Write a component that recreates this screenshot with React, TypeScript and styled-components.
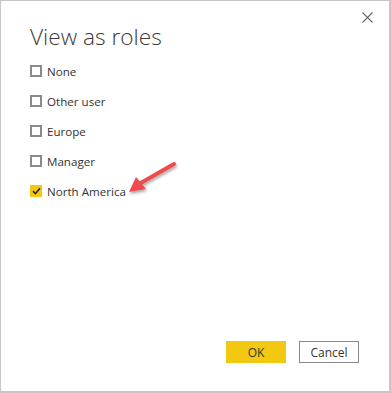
import styled, { createGlobalStyle } from 'styled-components';

const GlobalStyle = createGlobalStyle`
  html, body {
    margin: 0;
    padding: 0;
    background: #ffffff;
  }
  body {
    font-family: "Open Sans", "Noto Sans", sans-serif;
  }
`;

const Dialog = styled.div`
  box-sizing: border-box;
  width: 391px;
  height: 393px;
  border: 1px solid #c6c6c6;
  border-right-width: 2px;
  border-bottom-width: 2px;
  background: #ffffff;
  position: relative;
  display: flex;
  flex-direction: column;
  padding: 18px 30px 28px 29px;
`;

const CloseButton = styled.button`
  position: absolute;
  top: 8px;
  right: 14px;
  width: 16px;
  height: 16px;
  padding: 0;
  border: none;
  background: transparent;
  display: flex;
  align-items: center;
  justify-content: center;
`;

const Title = styled.h1`
  margin: 0 0 7px;
  font-family: "Open Sans", sans-serif;
  font-weight: 300;
  font-size: 22.7px;
  line-height: 36px;
  color: #3b3b3b;
`;

const RoleList = styled.div`
  display: flex;
  flex-direction: column;
  gap: 12px;
`;

const RoleRow = styled.label`
  display: flex;
  align-items: center;
  gap: 5px;
  height: 18px;
  position: relative;
  font-family: "Open Sans", sans-serif;
  font-size: 11.6px;
  color: #333333;
`;

const Box = styled.span<{ $checked: boolean }>`
  box-sizing: border-box;
  width: 12px;
  height: 12px;
  border: ${({ $checked }) => ($checked ? 'none' : '2px solid #8a8a8a')};
  background: ${({ $checked }) => ($checked ? '#f2c811' : '#ffffff')};
  display: flex;
  align-items: center;
  justify-content: center;
`;

const Pointer = styled.svg`
  position: absolute;
  left: 95px;
  top: -24px;
  overflow: visible;
`;

const Spacer = styled.div`
  flex: 1;
`;

const Footer = styled.div`
  display: flex;
  justify-content: flex-end;
  gap: 13px;
`;

const Button = styled.button<{ $primary?: boolean }>`
  box-sizing: border-box;
  width: 60px;
  height: 22px;
  padding: 0;
  font-family: "Open Sans", sans-serif;
  font-size: 12px;
  color: #333333;
  background: ${({ $primary }) => ($primary ? '#f2c811' : '#ffffff')};
  border: ${({ $primary }) => ($primary ? 'none' : '1px solid #8a8a8a')};
`;

const roles = ['None', 'Other user', 'Europe', 'Manager', 'North America'];

export default function App() {
  return (
    <>
      <GlobalStyle />
      <Dialog>
        <CloseButton aria-label="Close">
          <svg width="11" height="11" viewBox="0 0 11 11">
            <path d="M0.5 0.5 L10.5 10.5 M10.5 0.5 L0.5 10.5" stroke="#6b6b6b" strokeWidth="1.1" />
          </svg>
        </CloseButton>
        <Title>View as roles</Title>
        <RoleList>
          {roles.map((role) => {
            const checked = role === 'North America';
            return (
              <RoleRow key={role}>
                <Box $checked={checked}>
                  {checked && (
                    <svg width="9" height="8" viewBox="0 0 9 8">
                      <path d="M1 4.2 L3.4 6.5 L8 1.2" fill="none" stroke="#2b2b2b" strokeWidth="1.6" />
                    </svg>
                  )}
                </Box>
                {role}
                {checked && (
                  <Pointer width="60" height="40" viewBox="0 0 60 40">
                    <defs>
                      <filter id="sh" x="-20%" y="-20%" width="150%" height="160%">
                        <feDropShadow dx="1" dy="2" stdDeviation="1.5" floodColor="#000" floodOpacity="0.35" />
                      </filter>
                    </defs>
                    <g filter="url(#sh)">
                      <path d="M49 6 L14 26" stroke="#ee4c50" strokeWidth="4" strokeLinecap="round" />
                      <path d="M4 34 L11 19 L21 31 Z" fill="#ee4c50" />
                    </g>
                  </Pointer>
                )}
              </RoleRow>
            );
          })}
        </RoleList>
        <Spacer />
        <Footer>
          <Button $primary>OK</Button>
          <Button>Cancel</Button>
        </Footer>
      </Dialog>
    </>
  );
}
